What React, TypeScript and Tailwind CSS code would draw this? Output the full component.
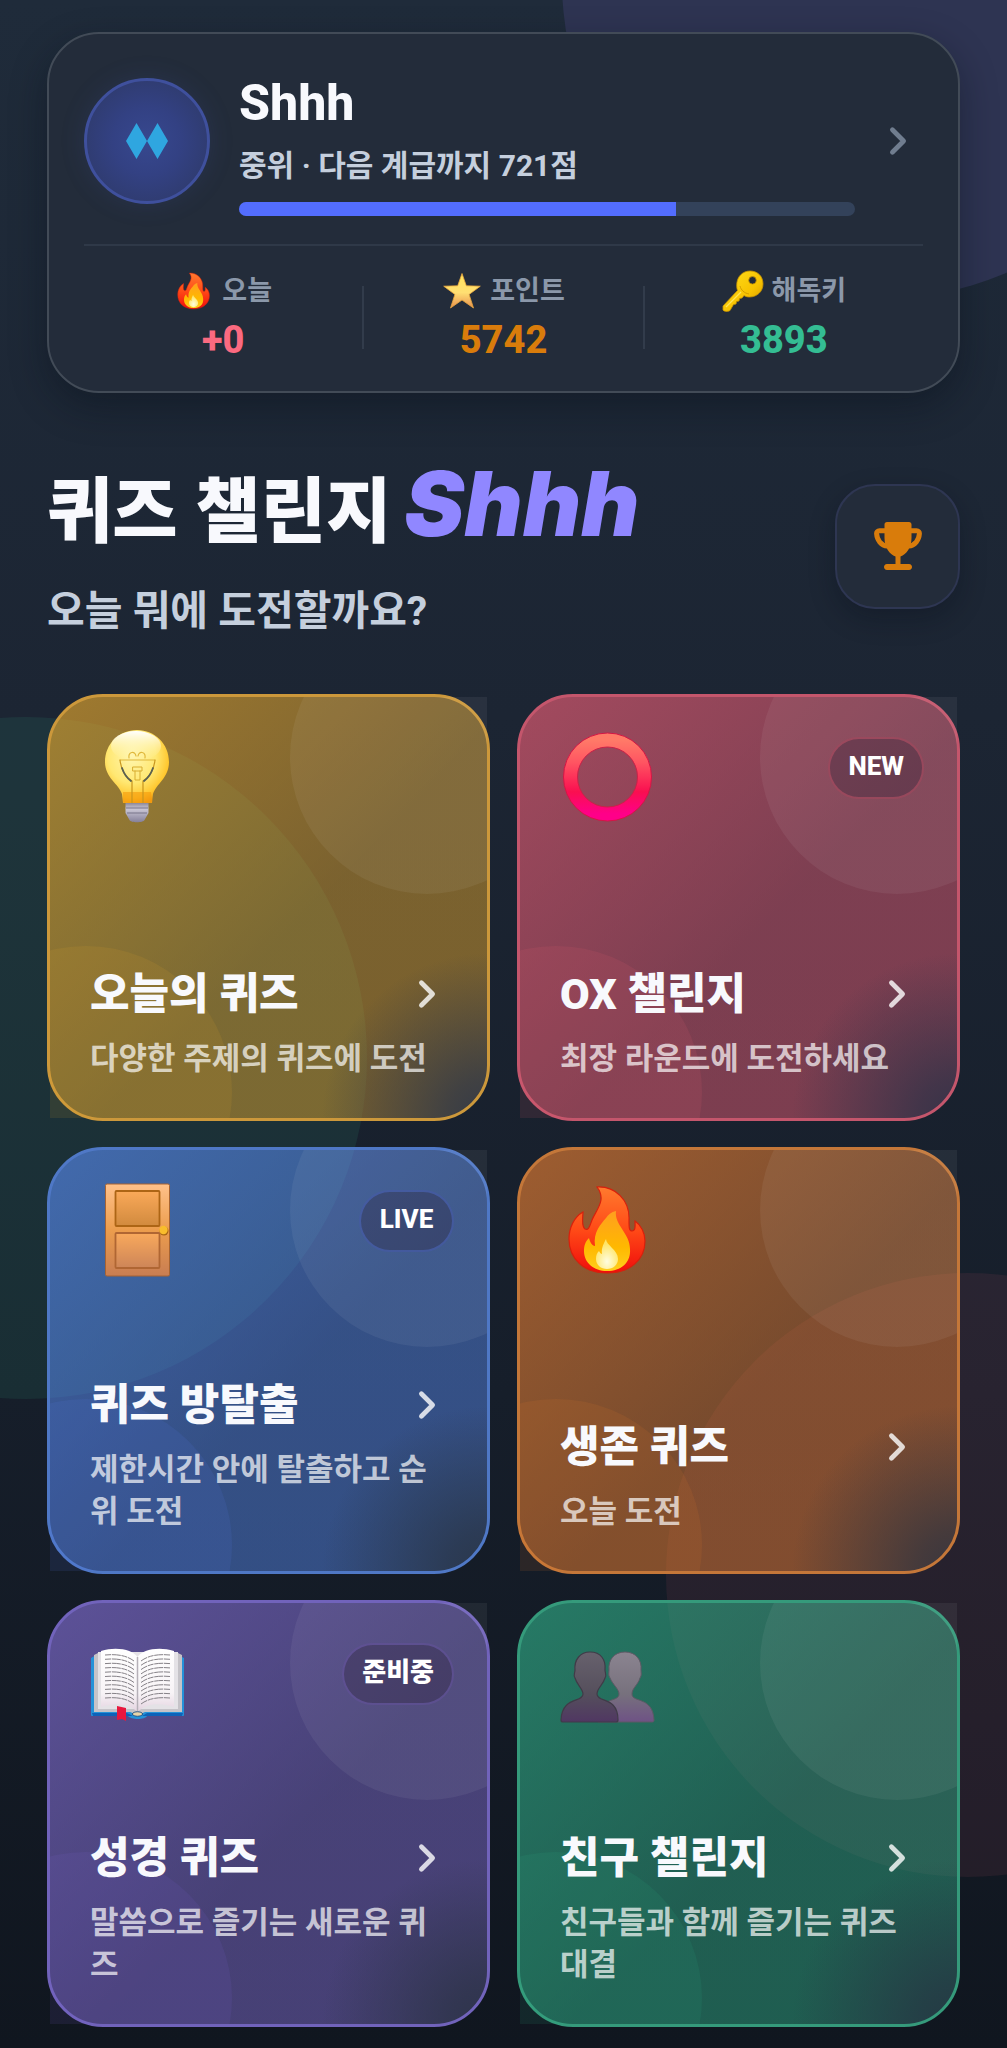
import React from "react";
import { IoChevronForward } from "react-icons/io5";

function TrophyIcon() {
  return (
    <svg viewBox="0 0 48 48" className="size-12" aria-hidden="true">
      <path
        d="M13 0h22c1.500 0 2.500 1 2.500 2.500V16c0 10-5 16-11 18.500V42H35c4 0 4 6 0 6H13c-4 0-4-6 0-6h8.500v-7.500c-6-2.500-11-8.500-11-18.500V2.500C10.500 1 11.500 0 13 0z"
        fill="currentColor"
      />
      <path
        d="M12 8.700H5.500c-2 0-3 1.300-2.900 3C3 18 7 23.500 13.500 24M36 8.700h6.500c2 0 3 1.300 2.900 3C45 18 41 23.500 34.500 24"
        fill="none"
        stroke="currentColor"
        strokeWidth="5"
      />
    </svg>
  );
}

function FlameIcon({ className, id }: { className: string; id: string }) {
  return (
    <svg viewBox="0 0 96 96" className={className} aria-hidden="true">
      <defs>
        <linearGradient id={`${id}-outer`} x1="0" y1="0" x2="0" y2="1">
          <stop offset="0" stopColor="#ff7a2e" />
          <stop offset="0.5" stopColor="#ff4a17" />
          <stop offset="1" stopColor="#f00c0c" />
        </linearGradient>
        <linearGradient id={`${id}-mid`} x1="0" y1="0" x2="0" y2="1">
          <stop offset="0" stopColor="#ff9f1f" />
          <stop offset="0.6" stopColor="#ffb800" />
          <stop offset="1" stopColor="#ffce1c" />
        </linearGradient>
        <radialGradient id={`${id}-core`} cx="0.5" cy="0.75" r="0.6">
          <stop offset="0" stopColor="#fffde0" />
          <stop offset="1" stopColor="#ffe566" />
        </radialGradient>
      </defs>
      <path
        d="M37 5C55 4 70 18 69 38c0 7 0 11 3 11 4 0 3-6 3-10 6 4 10 12 10 20 0 19-15 32-38 32S9 77 9 57c0-11 5-22 14-27 0 5-2 14 2 17 4 2 5-4 7-9 4-10 15-20 5-33z"
        fill={`url(#${id}-outer)`}
        stroke="#d8200c"
        strokeWidth="1.2"
      />
      <path
        d="M56 29c-2 14 14 22 14 38 1 14-9 22-23 22-13 0-23-8-23-20 0-5 1-9 5-13 1 4 3 8 6 8-2-14 6-22 11-28 2-3 5-6 10-7z"
        fill={`url(#${id}-mid)`}
      />
      <path
        d="M46 57c0 6 12 11 12 20 0 6-5 10-11 10s-11-4-11-10c0-4 1-6 3-8 1 2 2 3 3 3-1-6 2-11 4-15z"
        fill={`url(#${id}-core)`}
      />
    </svg>
  );
}

function StarIcon() {
  return (
    <svg viewBox="0 0 40 40" className="size-10" aria-hidden="true">
      <defs>
        <linearGradient id="star" x1="0" y1="0" x2="0" y2="1">
          <stop offset="0" stopColor="#ffe45c" />
          <stop offset="0.55" stopColor="#ffdf72" />
          <stop offset="1" stopColor="#e8904f" />
        </linearGradient>
      </defs>
      <path
        d="M20 2.500l4.300 12.300 14 .4-11.200 8.200L31.500 37 20 29 8.500 37l4.400-13.600L1.700 15.200l14-.4z"
        fill="url(#star)"
        stroke="#e9a63c"
        strokeWidth="0.8"
        strokeLinejoin="round"
      />
    </svg>
  );
}

function KeyIcon() {
  return (
    <svg viewBox="0 0 42 42" className="size-[42px]" aria-hidden="true">
      <defs>
        <linearGradient id="key" x1="0" y1="0" x2="1" y2="1">
          <stop offset="0" stopColor="#ffdf1f" />
          <stop offset="0.6" stopColor="#f7c200" />
          <stop offset="1" stopColor="#c98f00" />
        </linearGradient>
      </defs>
      <path
        fillRule="evenodd"
        d="M28 1c8 0 13 5.500 13 13s-6 13-13.500 13c-2 0-4-.5-5.500-1.500l-2 2.500-2.500.5-.5 2.500-2.500.5-.5 2.500-2.500.5L8 40.500c-2 1.500-6.500 1-7-.5v-4l14.500-15.500C14 16 14.500 9 18.500 5 21 2.300 24.500 1 28 1zm2.500 5.500a3.800 3.800 0 100 7.600 3.800 3.800 0 000-7.600z"
        fill="url(#key)"
        stroke="#c99300"
        strokeWidth="0.8"
      />
      <path d="M4 37l15-15" stroke="#ffe55a" strokeWidth="1.300" />
      <path d="M18 16c1 4 4 7 9 8" stroke="#c99300" strokeWidth="0.8" fill="none" />
    </svg>
  );
}

function BulbIcon() {
  return (
    <svg viewBox="0 0 96 96" className="size-24" aria-hidden="true">
      <defs>
        <radialGradient id="bulb" cx="0.42" cy="0.35" r="0.68">
          <stop offset="0" stopColor="#fff6b0" />
          <stop offset="0.55" stopColor="#ffe873" />
          <stop offset="0.85" stopColor="#ffc72e" />
          <stop offset="1" stopColor="#f09a12" />
        </radialGradient>
        <linearGradient id="bulbTop" x1="0" y1="0" x2="0" y2="1">
          <stop offset="0" stopColor="#ffffff" />
          <stop offset="1" stopColor="#fff3a0" stopOpacity="0" />
        </linearGradient>
        <linearGradient id="bulbBase" x1="0" y1="0" x2="0" y2="1">
          <stop offset="0" stopColor="#8d8898" />
          <stop offset="0.3" stopColor="#cbc8d6" />
          <stop offset="1" stopColor="#85809a" />
        </linearGradient>
      </defs>
      <path
        d="M47 1c18 0 32 14 32 32 0 16-13 22-16 32l-1 9H33l-1-9C29 55 15 49 15 33 15 15 29 1 47 1z"
        fill="url(#bulb)"
      />
      <path d="M33 63h28l1 9c0 3-29 3-29 0z" fill="#f59a0c" opacity="0.6" />
      <ellipse cx="46" cy="17" rx="25" ry="15" fill="url(#bulbTop)" />
      <g fill="none" strokeLinecap="round">
        <path d="M30 31h35M39 29c-1-6 6-8 7-2m2 0c1-6 8-4 7 2" stroke="#e0b83c" strokeWidth="1.200" />
        <path d="M30 31c1 9 5 17 12 21v22M65 31c-1 9-5 17-12 21v22" stroke="#c9961e" strokeWidth="1.200" />
        <path d="M32 39c2 6 5 10 9 13M63 39c-2 6-5 10-9 13" stroke="#596052" strokeWidth="1.800" />
        <path d="M43 38h9v4h-9zM45 42v9h5v-9" stroke="#d8ad30" strokeWidth="1" />
      </g>
      <path d="M35.500 74h23v10l-4 7c-1 3-14 3-15 0l-4-7z" fill="url(#bulbBase)" />
      <path d="M36 79h22M37 84h20" stroke="#79748a" strokeWidth="1.200" />
    </svg>
  );
}

function RingIcon() {
  return (
    <svg viewBox="0 0 96 96" className="size-24" aria-hidden="true">
      <defs>
        <linearGradient id="ring" x1="0" y1="0" x2="0" y2="1">
          <stop offset="0" stopColor="#ff7a68" />
          <stop offset="0.3" stopColor="#ff5562" />
          <stop offset="0.7" stopColor="#fa0f50" />
          <stop offset="1" stopColor="#ff0089" />
        </linearGradient>
      </defs>
      <circle cx="47.500" cy="48" r="37" fill="none" stroke="url(#ring)" strokeWidth="14" />
      <circle cx="47.500" cy="48" r="44" fill="none" stroke="#d41645" strokeWidth="1" />
      <circle cx="47.500" cy="48" r="30" fill="none" stroke="#cc2148" strokeWidth="1" />
    </svg>
  );
}

function DoorIcon() {
  return (
    <svg viewBox="0 0 96 96" className="size-24" aria-hidden="true">
      <defs>
        <linearGradient id="door" x1="0" y1="0" x2="0" y2="1">
          <stop offset="0" stopColor="#ffc18a" />
          <stop offset="0.5" stopColor="#ec9d4d" />
          <stop offset="1" stopColor="#c87d52" />
        </linearGradient>
        <linearGradient id="panelTop" x1="0" y1="0" x2="0" y2="1">
          <stop offset="0" stopColor="#faa959" />
          <stop offset="1" stopColor="#d18a3e" />
        </linearGradient>
        <linearGradient id="panelLow" x1="0" y1="0" x2="0" y2="1">
          <stop offset="0" stopColor="#f9a95c" />
          <stop offset="1" stopColor="#cd8558" />
        </linearGradient>
      </defs>
      <rect x="15.500" y="2" width="64" height="92" rx="1.500" fill="url(#door)" stroke="#a66332" strokeWidth="1" />
      <rect x="25.500" y="9" width="44" height="35" rx="1" fill="url(#panelTop)" stroke="#ad6515" strokeWidth="1.800" />
      <rect x="25.500" y="51" width="44" height="35" rx="1" fill="url(#panelLow)" stroke="#b06633" strokeWidth="1.800" />
      <circle cx="74" cy="49" r="4.500" fill="#a86614" />
      <circle cx="73.500" cy="48" r="4.200" fill="#f9bd2c" />
    </svg>
  );
}

function BookIcon() {
  const rows = [0, 1, 2, 3, 4, 5, 6, 7, 8, 9, 10];
  return (
    <svg viewBox="0 0 96 96" className="size-24" aria-hidden="true">
      <defs>
        <linearGradient id="page" x1="0" y1="0" x2="0" y2="1">
          <stop offset="0" stopColor="#ffffff" />
          <stop offset="0.7" stopColor="#f7f3f6" />
          <stop offset="1" stopColor="#e4d3e0" />
        </linearGradient>
      </defs>
      <path d="M1 23l5-3h82l6 3v57c0 1-1 1-2 1H57c-2 4-16 4-19 0H3c-1 0-2 0-2-1z" fill="#2492d8" />
      <path d="M2 78h35l6 3H3zM93 78H57l-5 3h40z" fill="#0e62b8" />
      <path d="M4 20l6-3h76l6 3v57H55l-7 3-8-3H4z" fill="#c5c3c8" />
      <path d="M8 17h80v57H8z" fill="#e4e2e6" />
      <path d="M11 16c16-5 32-1 36.500 6V77C40 69 26 67 11 72z" fill="url(#page)" />
      <path d="M84 16c-16-5-32-1-36.500 6V77C55 69 69 67 84 72z" fill="url(#page)" />
      <path d="M47.500 22v55" stroke="#b6b0b8" strokeWidth="1.500" />
      <g fill="none" stroke="#858187" strokeWidth="1" strokeDasharray="6 0.8 9 0.7">
        {rows.map((row) => (
          <path
            key={row}
            d={`M15 ${20 + row * 4.3}c11-1 21 0 29 6M80 ${20 + row * 4.3}c-11-1-21 0-29 6`}
          />
        ))}
      </g>
      <path d="M27 71l9 2v13l-4-2-5 1z" fill="#e8173e" />
      <path d="M42 79c2-3 9-3 11 0-2 3-9 3-11 0z" fill="#e8d4a8" stroke="#285a88" strokeWidth="1" />
    </svg>
  );
}

function PeopleIcon() {
  return (
    <svg viewBox="0 0 96 96" className="size-24" aria-hidden="true">
      <defs>
        <linearGradient id="personBack" x1="0" y1="0" x2="0" y2="1">
          <stop offset="0" stopColor="#8b8490" />
          <stop offset="0.6" stopColor="#77717d" />
          <stop offset="1" stopColor="#6e5285" />
        </linearGradient>
        <linearGradient id="personFront" x1="0" y1="0" x2="0" y2="1">
          <stop offset="0" stopColor="#67616d" />
          <stop offset="0.6" stopColor="#554f5c" />
          <stop offset="1" stopColor="#503762" />
        </linearGradient>
      </defs>
      <path
        d="M65 17c11 0 17 8 16 18 0 3 1 5-1 8-2 7-8 10-8 16 0 9 21 2 22 26 0 2-1 2-2 2H39c-1 0-2 0-2-2 1-24 22-17 22-26 0-5-6-9-9-16-2-3-1-5-1-8-1-10 5-18 16-18z"
        fill="url(#personBack)"
        stroke="#5e5965"
        strokeWidth="1"
      />
      <path
        d="M30 17c11 0 16 8 15 18 0 3 2 5 0 8-2 7-8 10-8 16 0 9 21 2 21 26 0 2-1 2-2 2H3c-1 0-2 0-2-2 1-24 22-17 22-26 0-5-6-9-8-16-2-3 0-5 0-8-1-10 5-18 15-18z"
        fill="url(#personFront)"
        stroke="#403b48"
        strokeWidth="1.200"
      />
    </svg>
  );
}

type Quiz = {
  title: string;
  text: string;
  badge?: string;
  icon: React.ReactNode;
  card: string;
  glow: string;
  badgeBorder: string;
};

const quizzes: Quiz[] = [
  {
    title: "오늘의 퀴즈",
    text: "다양한 주제의 퀴즈에 도전",
    icon: <BulbIcon />,
    card: "border-[#cc983b] bg-[radial-gradient(circle_at_100%_100%,#343a47_0,#343a47d0_40px,#343a4700_165px),linear-gradient(135deg,#f0ae2d9e_0%,#f0ae2d73_55%,#f0ae2d73_100%)]",
    glow: "bg-[#f0ae2d1c]",
    badgeBorder: "border-[#f0ae2d55]",
  },
  {
    title: "OX 챌린지",
    text: "최장 라운드에 도전하세요",
    badge: "NEW",
    icon: <RingIcon />,
    card: "border-[#c4566c] bg-[radial-gradient(circle_at_100%_100%,#363348_0,#363348d0_40px,#36334800_165px),linear-gradient(135deg,#f661799e_0%,#f6617973_55%,#f6617973_100%)]",
    glow: "bg-[#f661791c]",
    badgeBorder: "border-[#f6617955]",
  },
  {
    title: "퀴즈 방탈출",
    text: "제한시간 안에 탈출하고 순위 도전",
    badge: "LIVE",
    icon: <DoorIcon />,
    card: "border-[#4f78c6] bg-[radial-gradient(circle_at_100%_100%,#2a374b_0,#2a374bd0_40px,#2a374b00_165px),linear-gradient(135deg,#5a8df59e_0%,#5a8df573_55%,#5a8df573_100%)]",
    glow: "bg-[#5a7df51c]",
    badgeBorder: "border-[#5a7df555]",
  },
  {
    title: "생존 퀴즈",
    text: "오늘 도전",
    icon: <FlameIcon className="size-24" id="survival" />,
    card: "border-[#c47739] bg-[radial-gradient(circle_at_100%_100%,#38363e_0,#38363ed0_40px,#38363e00_165px),linear-gradient(135deg,#f082329e_0%,#f0823273_55%,#f0823273_100%)]",
    glow: "bg-[#f082321c]",
    badgeBorder: "border-[#f0823255]",
  },
  {
    title: "성경 퀴즈",
    text: "말씀으로 즐기는 새로운 퀴즈",
    badge: "준비중",
    icon: <BookIcon />,
    card: "border-[#7163bb] bg-[radial-gradient(circle_at_100%_100%,#2e344a_0,#2e344ad0_40px,#2e344a00_165px),linear-gradient(135deg,#8973de9e_0%,#8973de73_55%,#8973de73_100%)]",
    glow: "bg-[#7f63de1c]",
    badgeBorder: "border-[#8973de55]",
  },
  {
    title: "친구 챌린지",
    text: "친구들과 함께 즐기는 퀴즈 대결",
    icon: <PeopleIcon />,
    card: "border-[#359a7b] bg-[radial-gradient(circle_at_100%_100%,#253944_0,#253944d0_40px,#25394400_165px),linear-gradient(135deg,#32b48c9e_0%,#32b48c73_55%,#32b48c73_100%)]",
    glow: "bg-[#32b48c1c]",
    badgeBorder: "border-[#32b48c55]",
  },
];

function QuizCard({ quiz }: { quiz: Quiz }) {
  return (
    <button
      type="button"
      className={`relative flex min-h-[427px] flex-col rounded-[56px] border-3 px-10 pt-8 pb-[38px] text-left ${quiz.card}`}
    >
      <span className="absolute inset-0 overflow-hidden" aria-hidden="true">
        <span className="absolute -top-[77px] -right-[77px] size-[274px] rounded-full bg-white/6" />
        <span className={`absolute -bottom-[120px] -left-[110px] size-[292px] rounded-full ${quiz.glow}`} />
      </span>
      <span className="relative flex w-full items-start justify-between">
        {quiz.icon}
        {quiz.badge && (
          <span
            className={`mt-2 -mr-[7px] flex h-[62px] min-w-[95px] items-center justify-center rounded-full border-2 bg-[#2a1e3250] px-[18px] pb-1 text-[26px] font-extrabold text-white ${quiz.badgeBorder}`}
          >
            {quiz.badge}
          </span>
        )}
      </span>
      <span className="relative mt-auto flex w-full items-center justify-between">
        <span className="text-[43px] leading-[56px] font-black text-[#f8f9fd]">{quiz.title}</span>
        <IoChevronForward className="size-10 text-white/80 [&_path]:[stroke-width:60]" />
      </span>
      <span className="relative mt-4 text-[31px] leading-[42px] font-bold text-white/70">{quiz.text}</span>
    </button>
  );
}

const stats = [
  { label: "오늘", value: "+0", color: "text-[#fb6a80]", icon: <FlameIcon className="size-10" id="today" /> },
  { label: "포인트", value: "5742", color: "text-[#d97c0b]", icon: <StarIcon /> },
  { label: "해독키", value: "3893", color: "text-[#34bd93]", icon: <KeyIcon /> },
];

export default function App() {
  return (
    <main className="relative min-h-screen overflow-hidden bg-[linear-gradient(180deg,#1f2b3a_0%,#1c2533_35%,#161e2a_68%,#10161f_100%)] px-[47px] pt-8 pb-5 font-[Roboto,'Noto_Sans_CJK_KR',sans-serif]">
      <div className="absolute -top-[337px] left-[562px] size-[636px] rounded-full bg-[#2e3452]" />
      <div className="absolute top-[717px] -left-[315px] size-[682px] rounded-full bg-[#34b48c1c]" />
      <div className="absolute top-[1273px] left-[666px] size-[604px] rounded-full bg-[#f0617915]" />

      <section className="relative rounded-[52px] border-2 border-[#424b57] bg-[#232c3a] px-[35px] pt-[31px] pb-6 shadow-[0_14px_36px_rgba(8,14,24,0.4)]">
        <div className="flex items-center">
          <div className="flex size-[126px] shrink-0 items-center justify-center rounded-full border-3 border-[#3f509d] bg-[radial-gradient(circle,#37488f_0%,#334183_40%,#2d3863_100%)] shadow-[0_0_24px_rgba(63,80,157,0.2)]">
            <svg viewBox="0 0 44 38" className="h-[38px] w-11" aria-hidden="true">
              <path d="M11.500 1L22 19 11.500 37 1 19zM32.500 1L43 19 32.500 37 22 19z" fill="#2fa6e0" />
            </svg>
          </div>
          <div className="ml-[29px] min-w-0 flex-1">
            <h2 className="text-[50px] leading-[76px] font-extrabold text-[#f8f9fd]">Shhh</h2>
            <p className="mt-1 text-[30px] leading-[42px] font-bold text-[#c5cfdd]">중위 · 다음 계급까지 721점</p>
            <div
              role="progressbar"
              aria-label="다음 계급까지"
              aria-valuenow={71}
              aria-valuemin={0}
              aria-valuemax={100}
              className="mt-[15px] h-3.5 overflow-hidden rounded-full bg-[#33425a]"
            >
              <div className="h-full bg-[#536dfe]" style={{ width: "71%" }} />
            </div>
          </div>
          <button type="button" aria-label="프로필 보기" className="ml-[18px] flex w-[50px] shrink-0 justify-center text-[#707d8f]">
            <IoChevronForward className="size-10 [&_path]:[stroke-width:60]" />
          </button>
        </div>
        <div className="mt-7 flex items-center border-t-2 border-[#2f3948] pt-[21px]">
          {stats.map((stat, i) => (
            <React.Fragment key={stat.label}>
              {i > 0 && <div className="h-[63px] w-0.5 bg-[#323c4b]" />}
              <div className="flex flex-1 flex-col items-center">
                <div className="flex h-[47px] items-center gap-2">
                  {stat.icon}
                  <span className="text-[27px] leading-10 font-bold text-[#8b98aa]">{stat.label}</span>
                </div>
                <div className={`text-[38px] leading-[53px] font-extrabold ${stat.color}`}>{stat.value}</div>
              </div>
            </React.Fragment>
          ))}
        </div>
      </section>

      <header className="relative mt-[67px] flex items-center justify-between">
        <div>
          <h1 className="text-[71px] leading-[104px] font-black text-[#f8f9fd]">
            퀴즈 챌린지
            <span className="ml-[13px] font-[Inter] text-[90px] leading-[80px] font-black text-[#9087ff] italic">
              Shhh
            </span>
          </h1>
          <p className="mt-5 text-[41px] leading-[54px] font-bold text-[#c5cfdd]">오늘 뭐에 도전할까요?</p>
        </div>
        <button
          type="button"
          aria-label="랭킹"
          className="mb-1.5 flex size-[125px] shrink-0 items-center justify-center rounded-[40px] border-2 border-[#2e3652] bg-[#232c3a] text-[#d97c0b] shadow-[0_10px_26px_rgba(8,14,24,0.3)]"
        >
          <TrophyIcon />
        </button>
      </header>

      <div className="relative mt-14 grid grid-cols-2 gap-x-[27px] gap-y-[26px]">
        {quizzes.map((quiz) => (
          <QuizCard key={quiz.title} quiz={quiz} />
        ))}
      </div>
    </main>
  );
}
